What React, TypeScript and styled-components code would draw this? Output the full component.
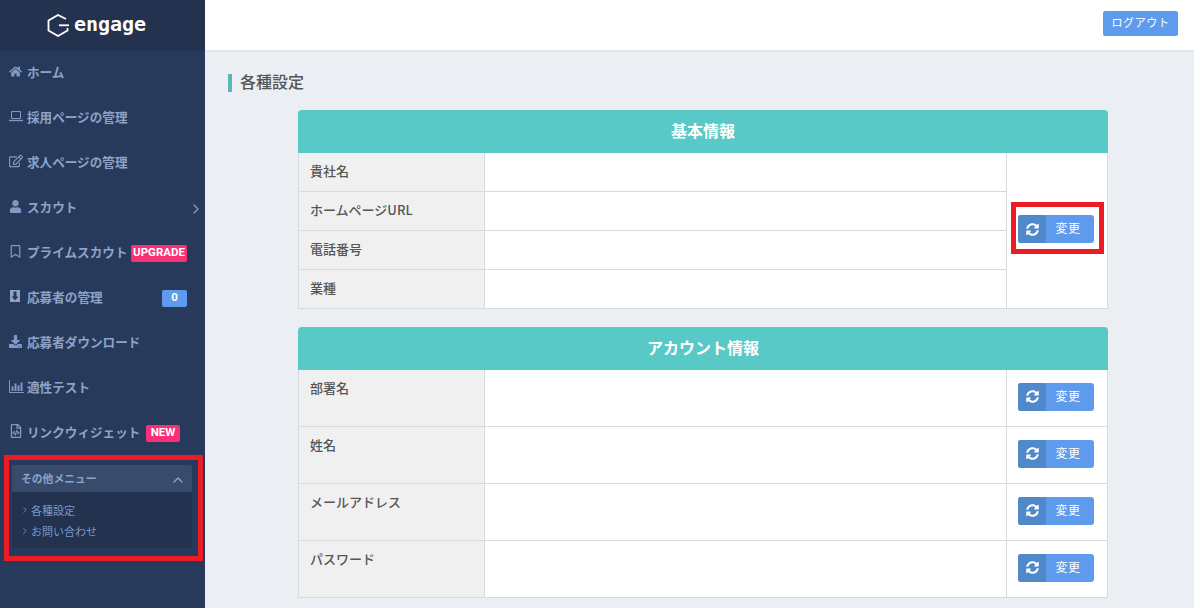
import React from "react";
import styled, { createGlobalStyle } from "styled-components";
import { FaHome, FaRegEdit, FaUser, FaRegBookmark, FaDownload, FaRegFileCode, FaSyncAlt } from "react-icons/fa";
import { FiChevronRight, FiChevronUp } from "react-icons/fi";

const Global = createGlobalStyle`
  html, body { margin: 0; padding: 0; height: 100%; overflow: hidden; background: #ebeef3; }
  #root { height: 100%; }
  * { box-sizing: border-box; }
  body { font-family: "Noto Sans CJK JP", "Noto Sans", sans-serif; color: #555; }
`;

const Page = styled.div`display: flex; height: 608px; overflow: hidden;`;
const Sidebar = styled.aside`width: 205px; flex: none; background: #283a5b; display: flex; flex-direction: column;`;
const Brand = styled.div`height: 51px; flex: none; background: #22324f; display: flex; align-items: center; justify-content: center; gap: 4px; padding-right: 12px;`;
const BrandName = styled.span`font-family: "DejaVu Sans Mono", monospace; font-weight: 700; font-size: 20px; color: #fff; line-height: 1; margin-top: -3px;`;
const Nav = styled.nav`display: flex; flex-direction: column; margin-top: -1px;`;
const NavItem = styled.a`
  position: relative; height: 45px; display: flex; align-items: center; padding: 0 0 3px 9px;
  font-size: 12.6px; font-weight: 700; color: #8ea3c7; white-space: nowrap;
`;
const NavIcon = styled.span<{ $size?: number }>`width: 18px; flex: none; display: flex; align-items: center; font-size: ${p => p.$size ?? 13}px; color: #7f98c4;`;
const Arrow = styled.span`position: absolute; right: 1px; top: 16px; display: flex; font-size: 16px; color: #7f98c4;`;
const Tag = styled.span<{ $bg: string; $right: number; $width: number }>`
  position: absolute; top: 15px; right: ${p => p.$right}px; width: ${p => p.$width}px; height: 17px; border-radius: 2px; background: ${p => p.$bg};
  color: #fff; font-family: Roboto, sans-serif; font-size: 11.5px; font-weight: 700; line-height: 15px; text-align: center;
`;
const RedFrame = styled.div`margin: 0 2px 0 4px; height: 106px; flex: none; border: 5px solid #ed1c24; padding: 5px 6px 8px 3px;`;
const Panel = styled.div`background: #22324f; height: 83px; border-radius: 2px; overflow: hidden;`;
const PanelHead = styled.div`height: 27px; background: #394b6c; display: flex; align-items: center; justify-content: space-between; padding: 0 6px 2px 9px; font-size: 10.8px; font-weight: 700; color: #8ea3c7;`;
const UpIcon = styled(FiChevronUp)`margin-top: 4px;`;
const SubList = styled.ul`list-style: none; margin: 0; padding: 8px 0 0 8px; color: #7f98c4;`;
const SubItem = styled.li`height: 20.5px; display: flex; align-items: center; gap: 1px; font-size: 11px;`;

const Main = styled.main`flex: 1; min-width: 0; display: flex; flex-direction: column;`;
const Topbar = styled.header`height: 52px; flex: none; background: #fff; border-bottom: 2px solid #e4e6ea; display: flex; justify-content: flex-end; padding: 11px 16px 0 0;`;
const Logout = styled.button`width: 75px; height: 25px; border: 0; border-radius: 2px; background: #5e9bec; color: #fff; font: 400 11px "Noto Sans CJK JP", sans-serif; padding: 0 0 3px; letter-spacing: 0.6px;`;
const Content = styled.div`padding: 22px 0 0 23px;`;
const Title = styled.h1`margin: 0 0 18px; height: 18px; border-left: 4px solid #5ab8b4; padding-left: 8px; font-size: 16px; font-weight: 500; line-height: 14px; color: #555;`;
const Section = styled.section`width: 810px; margin: 0 0 18px 70px;`;
const Head = styled.h2`margin: 0; height: 43px; background: #58c9c7; border-radius: 4px 4px 0 0; color: #fff; font-size: 16px; font-weight: 700; line-height: 41px; text-align: center;`;
const Table = styled.table`width: 810px; border-collapse: separate; border-spacing: 0; table-layout: fixed; background: #fff;`;
const Label = styled.th<{ $h: number }>`
  width: 187px; height: ${p => p.$h}px; background: #f0f0f0; border: solid #d9d9df; border-width: 0 1px 1px 1px;
  padding: ${p => (p.$h > 40 ? "8px 11px 0" : "0 11px 3px")};
  vertical-align: ${p => (p.$h > 40 ? "top" : "middle")}; text-align: left; font-size: 13px; font-weight: 500; color: #555;
`;
const Value = styled.td`border: solid #d9d9df; border-width: 0 1px 1px 0; width: 522px;`;
const Action = styled.td`border: solid #d9d9df; border-width: 0 1px 1px 0; width: 101px; padding: 0 0 3px 11px; vertical-align: middle;`;
const Change = styled.button`display: flex; width: 76px; height: 28px; border: 0; border-radius: 3px; overflow: hidden; padding: 0; background: #5e9bec; color: #fff; font: 400 12px "Noto Sans CJK JP", sans-serif;`;
const ChangeIcon = styled.span`width: 28px; height: 100%; background: #4f88cb; display: flex; align-items: center; justify-content: center; font-size: 13px;`;
const ChangeText = styled.span`flex: 1; line-height: 26px; text-align: center; letter-spacing: 0.5px; padding-right: 4px;`;
const Marked = styled.div`position: relative; width: 76px;`;
const Mark = styled.div`position: absolute; left: -7px; top: -13px; width: 93px; height: 52px; border: 5px solid #ed1c24; pointer-events: none;`;

const Hexagon = () => (
  <svg width="23" height="23" viewBox="46 13 23 23" fill="none" stroke="#fff" strokeWidth="1.8">
    <path d="M65 18 57 14 47.5 19.5v10L57 35l9.5-5.5V27" />
    <path d="M58 24.3h10" />
  </svg>
);

const LaptopIcon = () => (
  <svg width="14" height="12" viewBox="0 0 14 12" fill="none" stroke="currentColor">
    <path d="M2.5 1.5h9v7h-9z" />
    <path d="M0 10.5h14" strokeWidth="1.4" />
  </svg>
);

const ChartIcon = () => (
  <svg width="15" height="13" viewBox="0 0 15 13" fill="currentColor">
    <path d="M0 0h1v12h14v1H0z" />
    <path d="M2.5 6.5h2V11h-2zM5.5 3.5h2V11h-2zM8.5 5.5h2V11h-2zM11.5 2.5h2V11h-2z" />
  </svg>
);

const SaveIcon = () => (
  <svg width="12" height="12" viewBox="0 0 12 12">
    <path d="M1 0h10v12H1z" fill="#8ea3c7" />
    <path d="M4.5 1.5h3v5h2L6 10.5 2.5 6.5h2z" fill="#283a5b" />
  </svg>
);

const ChangeButton = () => (
  <Change>
    <ChangeIcon><FaSyncAlt /></ChangeIcon>
    <ChangeText>変更</ChangeText>
  </Change>
);

const items: { icon: React.ReactNode; text: string; size?: number; extra?: React.ReactNode }[] = [
  { icon: <FaHome />, text: "ホーム" },
  { icon: <LaptopIcon />, text: "採用ページの管理" },
  { icon: <FaRegEdit />, text: "求人ページの管理", size: 14 },
  { icon: <FaUser />, text: "スカウト", extra: <Arrow><FiChevronRight /></Arrow> },
  { icon: <FaRegBookmark />, text: "プライムスカウト", extra: <Tag $bg="#fb2f76" $right={18} $width={56}>UPGRADE</Tag> },
  { icon: <SaveIcon />, text: "応募者の管理", extra: <Tag $bg="#5e9bec" $right={18} $width={25}>0</Tag> },
  { icon: <FaDownload />, text: "応募者ダウンロード" },
  { icon: <ChartIcon />, text: "適性テスト" },
  { icon: <FaRegFileCode />, text: "リンクウィジェット", size: 14, extra: <Tag $bg="#fb2f76" $right={25} $width={34}>NEW</Tag> },
];

const basic = ["貴社名", "ホームページURL", "電話番号", "業種"];
const account = ["部署名", "姓名", "メールアドレス", "パスワード"];

export default function App() {
  return (
    <Page>
      <Global />
      <Sidebar>
        <Brand><Hexagon /><BrandName>engage</BrandName></Brand>
        <Nav>
          {items.map(i => (
            <NavItem key={i.text}><NavIcon $size={i.size}>{i.icon}</NavIcon>{i.text}{i.extra}</NavItem>
          ))}
        </Nav>
        <RedFrame>
          <Panel>
            <PanelHead>その他メニュー<UpIcon size={16} /></PanelHead>
            <SubList>
              <SubItem><FiChevronRight size={10} />各種設定</SubItem>
              <SubItem><FiChevronRight size={10} />お問い合わせ</SubItem>
            </SubList>
          </Panel>
        </RedFrame>
      </Sidebar>
      <Main>
        <Topbar><Logout>ログアウト</Logout></Topbar>
        <Content>
          <Title>各種設定</Title>
          <Section>
            <Head>基本情報</Head>
            <Table>
              <tbody>
                {basic.map((b, n) => (
                  <tr key={b}>
                    <Label $h={39}>{b}</Label>
                    <Value />
                    {n === 0 && <Action rowSpan={4}><Marked><ChangeButton /><Mark /></Marked></Action>}
                  </tr>
                ))}
              </tbody>
            </Table>
          </Section>
          <Section>
            <Head>アカウント情報</Head>
            <Table>
              <tbody>
                {account.map(a => (
                  <tr key={a}>
                    <Label $h={57}>{a}</Label>
                    <Value />
                    <Action><ChangeButton /></Action>
                  </tr>
                ))}
              </tbody>
            </Table>
          </Section>
        </Content>
      </Main>
    </Page>
  );
}
